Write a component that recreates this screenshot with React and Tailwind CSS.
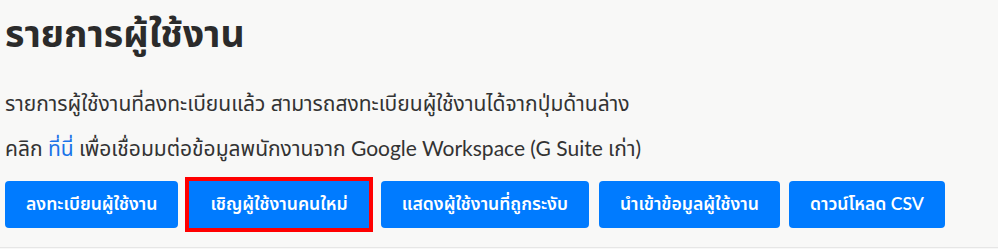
export default function App() {
  const btn =
    'h-[47px] px-[21px] rounded-[4px] bg-[#007bff] text-white text-[17.6px] font-semibold flex items-center whitespace-nowrap'

  return (
    <div className="w-[998px] h-[249px] bg-[#f8f8f7] text-[#333] overflow-hidden" style={{ fontFamily: 'Lato, "Noto Sans Thai", "Noto Sans", sans-serif' }}>
      <div className="px-[5px] border-b border-[#e6e6e6] h-[248px]">
        <h1 className="text-[37.5px] font-bold leading-none pt-[14px] text-[#2b2b2b]">รายการผู้ใช้งาน</h1>

        <p className="text-[21px] mt-[37px] leading-[27px]">
          รายการผู้ใช้งานที่ลงทะเบียนแล้ว สามารถสงทะเบียนผู้ใช้งานได้จากปุ่มด้านล่าง
        </p>
        <p className="text-[21px] mt-[18px] leading-[27px]">
          คลิก <a className="text-[#1a73e8]">ที่นี่</a> เพื่อเชื่อมมต่อข้อมูลพนักงานจาก Google Workspace (G Suite เก่า)
        </p>

        <div className="flex items-center mt-[16px]">
          <button className={btn}>ลงทะเบียนผู้ใช้งาน</button>
          <div className="ml-[7px] border-4 border-[#ff0000]">
            <button className={btn + ' rounded-none h-[43px]'}>เชิญผู้ใช้งานคนใหม่</button>
          </div>
          <button className={btn + ' ml-[8px]'}>แสดงผู้ใช้งานที่ถูกระงับ</button>
          <button className={btn + ' ml-[10px]'}>นำเข้าข้อมูลผู้ใช้งาน</button>
          <button className={btn + ' ml-[9px]'}>ดาวน์โหลด CSV</button>
        </div>
      </div>
    </div>
  )
}
